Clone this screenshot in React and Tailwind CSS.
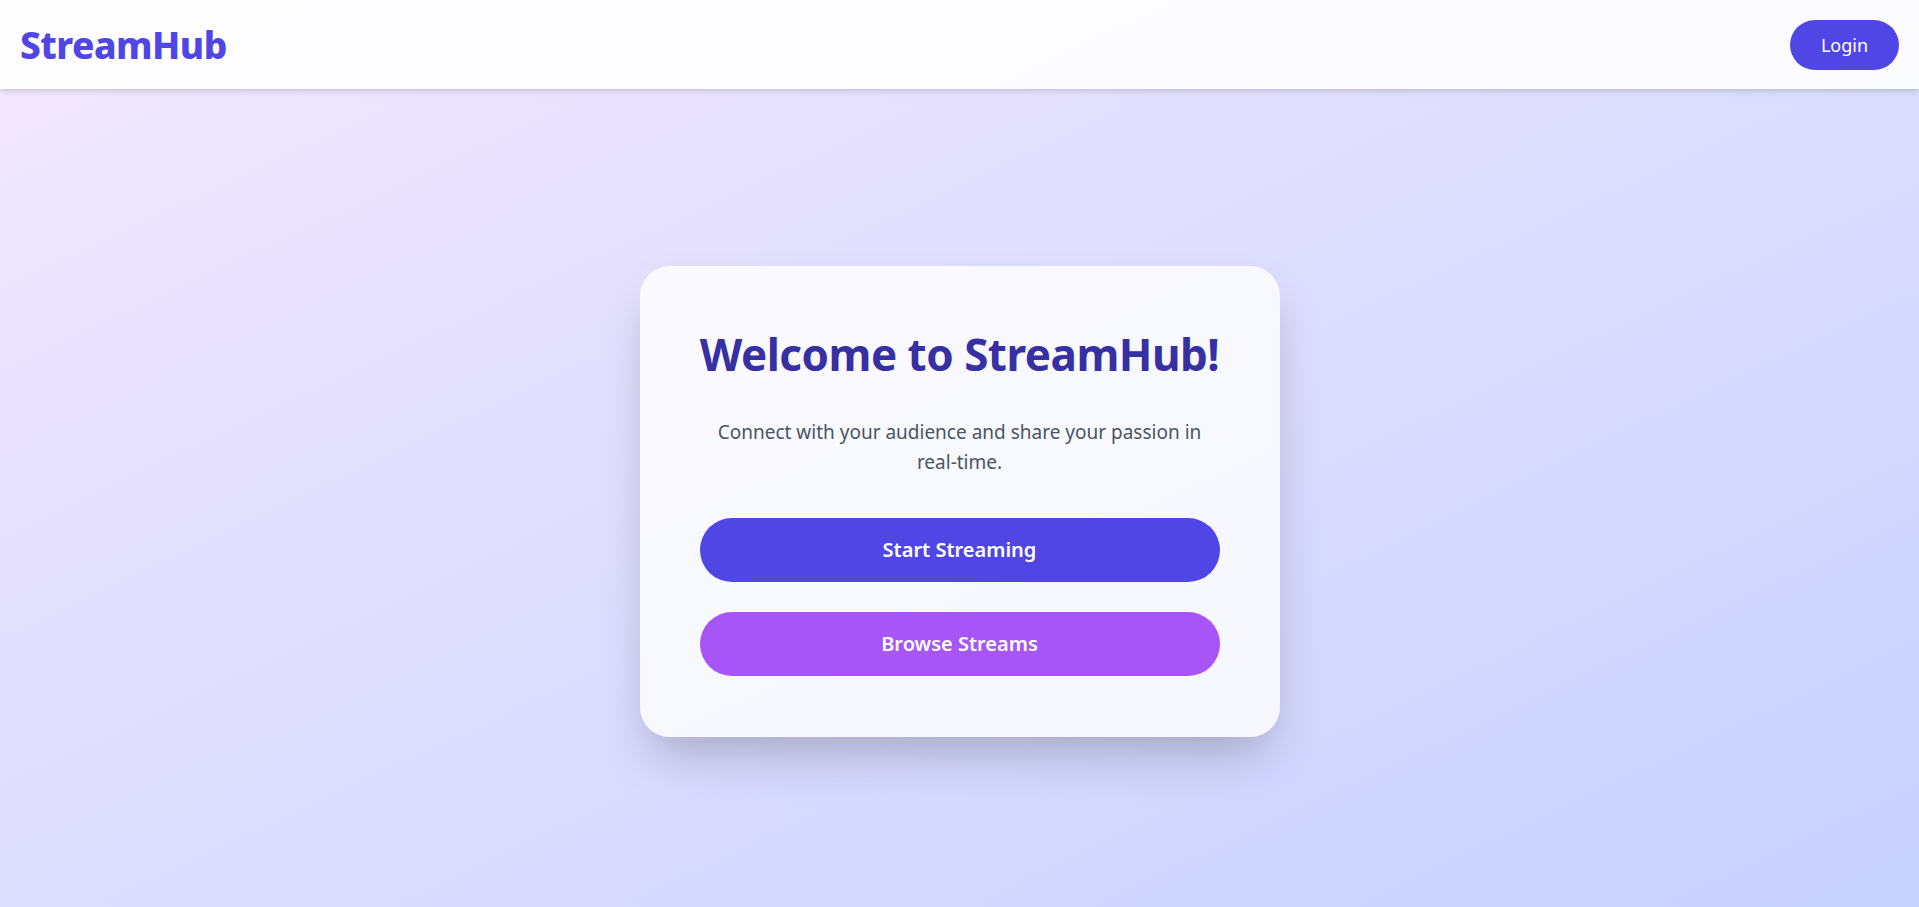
import { useState } from 'react'

const font = { fontFamily: '"Noto Sans", "Open Sans", sans-serif' }

function Header() {
  return (
    <header className="h-[89px] px-5 flex items-center justify-between bg-white/90 shadow-md relative z-10">
      <h1 className="text-[37px] font-extrabold text-[#4f46e5] tracking-[-0.5px]">StreamHub</h1>
      <button className="bg-[#4f46e5] text-white text-lg rounded-full w-[109px] h-[50px] flex items-center justify-center">
        Login
      </button>
    </header>
  )
}

export default function App() {
  const [mode, setMode] = useState(null)

  return (
    <div style={font} className="min-h-screen flex flex-col bg-gradient-to-br from-[#f3e8ff] to-[#c7d2fe]">
      <Header />
      <main className="flex-1 flex items-center justify-center pt-[7px]">
        <div className="w-[640px] bg-white/80 rounded-[30px] shadow-2xl px-15 pt-[60px] pb-[61px] text-center">
          <h2 className="text-[44px] leading-[56px] font-bold text-[#3730a3] tracking-[-0.5px]">Welcome to StreamHub!</h2>
          <p className="mt-[35px] text-[19px] leading-[30px] text-[#4b5563]">
            Connect with your audience and share your passion in <span className="whitespace-nowrap">real-time.</span>
          </p>
          <div className="mt-[41px] flex flex-col gap-[30px]">
            <button
              onClick={() => setMode('stream')}
              className="h-16 rounded-full bg-[#4f46e5] text-white text-xl font-semibold"
            >
              Start Streaming
            </button>
            <button
              onClick={() => setMode('browse')}
              className="h-16 rounded-full bg-[#a855f7] text-white text-xl font-semibold"
            >
              Browse Streams
            </button>
          </div>
        </div>
      </main>
    </div>
  )
}
